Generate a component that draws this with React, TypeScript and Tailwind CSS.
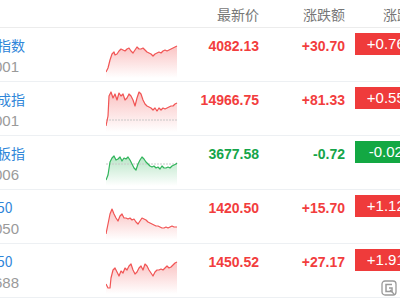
import React from "react";

type Row = {
  name: string;
  code: string;
  price: string;
  change: string;
  pct: string;
  up: boolean;
  pts: number[][];
  base?: number;
};

const rows: Row[] = [
  {
    name: "上证指数",
    code: "000001",
    price: "4082.13",
    change: "+30.70",
    pct: "+0.76%",
    up: true,
    pts: [[0,40],[2,36],[4,28],[6,22],[8,20],[9,23],[11,22],[13,19],[15,17],[17,18],[19,19],[21,17],[23,16],[25,19],[27,21],[29,18],[31,15],[33,17],[35,17],[37,16],[39,18],[41,20],[43,21],[45,22],[47,24],[49,22],[51,21],[53,20],[55,21],[57,19],[59,18],[61,19],[63,18],[65,17],[67,16],[69,15],[71,14]],
  },
  {
    name: "深证成指",
    code: "399001",
    price: "14966.75",
    change: "+81.33",
    pct: "+0.55%",
    up: true,
    base: 34,
    pts: [[0,40],[2,30],[3,10],[5,6],[7,12],[9,8],[11,14],[13,7],[15,10],[17,8],[19,14],[21,12],[23,8],[25,10],[27,14],[29,20],[31,12],[33,6],[35,8],[37,14],[39,18],[41,20],[43,21],[45,22],[47,24],[49,22],[51,25],[53,22],[55,24],[57,22],[59,23],[61,22],[63,21],[65,20],[67,20],[69,18],[71,17]],
  },
  {
    name: "创业板指",
    code: "399006",
    price: "3677.58",
    change: "-0.72",
    pct: "-0.02%",
    up: false,
    base: 24,
    pts: [[0,40],[2,35],[4,22],[6,18],[8,16],[10,20],[12,19],[14,17],[16,21],[18,18],[20,19],[22,17],[24,20],[26,24],[28,28],[30,30],[32,24],[34,20],[36,17],[38,19],[40,22],[42,24],[44,26],[46,27],[48,26],[50,28],[52,27],[54,29],[56,26],[58,28],[60,28],[62,27],[64,28],[66,26],[68,25],[70,24],[71,23]],
  },
  {
    name: "北证50",
    code: "899050",
    price: "1420.50",
    change: "+15.70",
    pct: "+1.12%",
    up: true,
    pts: [[0,40],[2,30],[4,20],[6,15],[8,20],[10,24],[12,27],[14,22],[16,20],[18,24],[20,24],[22,25],[24,24],[26,26],[28,25],[30,28],[32,30],[34,27],[36,24],[38,25],[40,26],[42,28],[44,29],[46,30],[48,31],[50,32],[52,32],[54,33],[56,34],[58,34],[60,33],[62,34],[64,33],[66,32],[68,33],[70,33],[71,33]],
  },
  {
    name: "科创50",
    code: "000688",
    price: "1450.52",
    change: "+27.17",
    pct: "+1.91%",
    up: true,
    pts: [[0,36],[2,40],[4,40],[5,30],[7,22],[9,20],[11,24],[13,28],[15,23],[17,25],[19,20],[21,22],[23,18],[25,16],[27,22],[29,26],[31,24],[33,20],[35,18],[37,22],[39,16],[41,18],[43,22],[45,25],[47,28],[49,24],[51,22],[53,22],[55,21],[57,22],[59,20],[61,18],[63,20],[65,19],[67,17],[69,15],[71,14]],
  },
];

function Spark({ row, id }: { row: Row; id: string }) {
  const color = row.up ? "#f15454" : "#2fb45a";
  const line = row.pts.map((p, i) => `${i ? "L" : "M"}${p[0]} ${p[1]}`).join(" ");
  const area = `${line} L71 46 L0 46 Z`;
  return (
    <svg width="72" height="50" viewBox="0 0 72 50" className="block">
      <defs>
        <linearGradient id={id} x1="0" y1="0" x2="0" y2="1">
          <stop offset="0%" stopColor={color} stopOpacity="0.35" />
          <stop offset="100%" stopColor={color} stopOpacity="0" />
        </linearGradient>
      </defs>
      <path d={area} fill={`url(#${id})`} />
      {row.base !== undefined && (
        <line x1="0" y1={row.base} x2="72" y2={row.base} stroke="#c8c8c8" strokeWidth="1" strokeDasharray="2 1" />
      )}
      <path d={line} fill="none" stroke={color} strokeWidth="1.2" strokeLinejoin="round" />
    </svg>
  );
}

export default function App() {
  return (
    <div className="relative w-[400px] h-[300px] overflow-hidden bg-white" style={{ fontFamily: '"Liberation Sans", "Noto Sans CJK SC", sans-serif' }}>
      <div className="ml-[-31px] w-[470px]">
        <div className="flex h-[28px] border-b border-[#ececec] text-[14px] text-[#777] leading-[28px]" style={{ fontFamily: '"Noto Sans CJK SC", sans-serif' }}>
          <div className="w-[137px]" />
          <div className="w-[72px]" />
          <div className="w-[81px] text-right">最新价</div>
          <div className="w-[86px] text-right">涨跌额</div>
          <div className="w-[10px]" />
          <div className="pl-[28px]">涨跌幅</div>
        </div>
        {rows.map((r, i) => {
          const c = r.up ? "text-[#f23d3d]" : "text-[#15a54a]";
          return (
            <div key={i} className="flex h-[54px] border-b border-[#edf0f3]">
              <div className="w-[137px] pt-[7px]">
                <div className="text-[14px] leading-[20px] text-[#2f86d9]" style={{ fontFamily: '"Noto Sans CJK SC", sans-serif' }}>{r.name}</div>
                <div className="text-[15px] leading-[20px] text-[#9a9a9a] mt-[2px]">{r.code}</div>
              </div>
              <div className="w-[72px] pt-[4px]">
                <Spark row={r} id={`g${i}`} />
              </div>
              <div className={`w-[81px] text-right pt-[8px] text-[14px] leading-[20px] font-bold ${c}`}>{r.price}</div>
              <div className={`w-[86px] text-right pt-[8px] text-[14px] leading-[20px] font-bold ${c}`}>{r.change}</div>
              <div className="w-[10px]" />
              <div className={`mt-[5px] w-[75px] h-[22px] text-center text-white text-[15px] leading-[22px] ${r.up ? "bg-[#ef3b3b]" : "bg-[#13a843]"}`}>{r.pct}</div>
            </div>
          );
        })}
      </div>
      <svg className="absolute left-[381px] top-[280px]" width="16" height="16" viewBox="0 0 16 16">
        <rect x="1" y="1" width="14" height="14" rx="3" fill="#fff" stroke="#9a9a9a" strokeWidth="1.3" />
        <path d="M11 4.5 H5 V11.5 H11 V8 H8" fill="none" stroke="#9a9a9a" strokeWidth="1.5" />
        <path d="M9 10 L13 14" stroke="#9a9a9a" strokeWidth="1.3" />
      </svg>
    </div>
  );
}
